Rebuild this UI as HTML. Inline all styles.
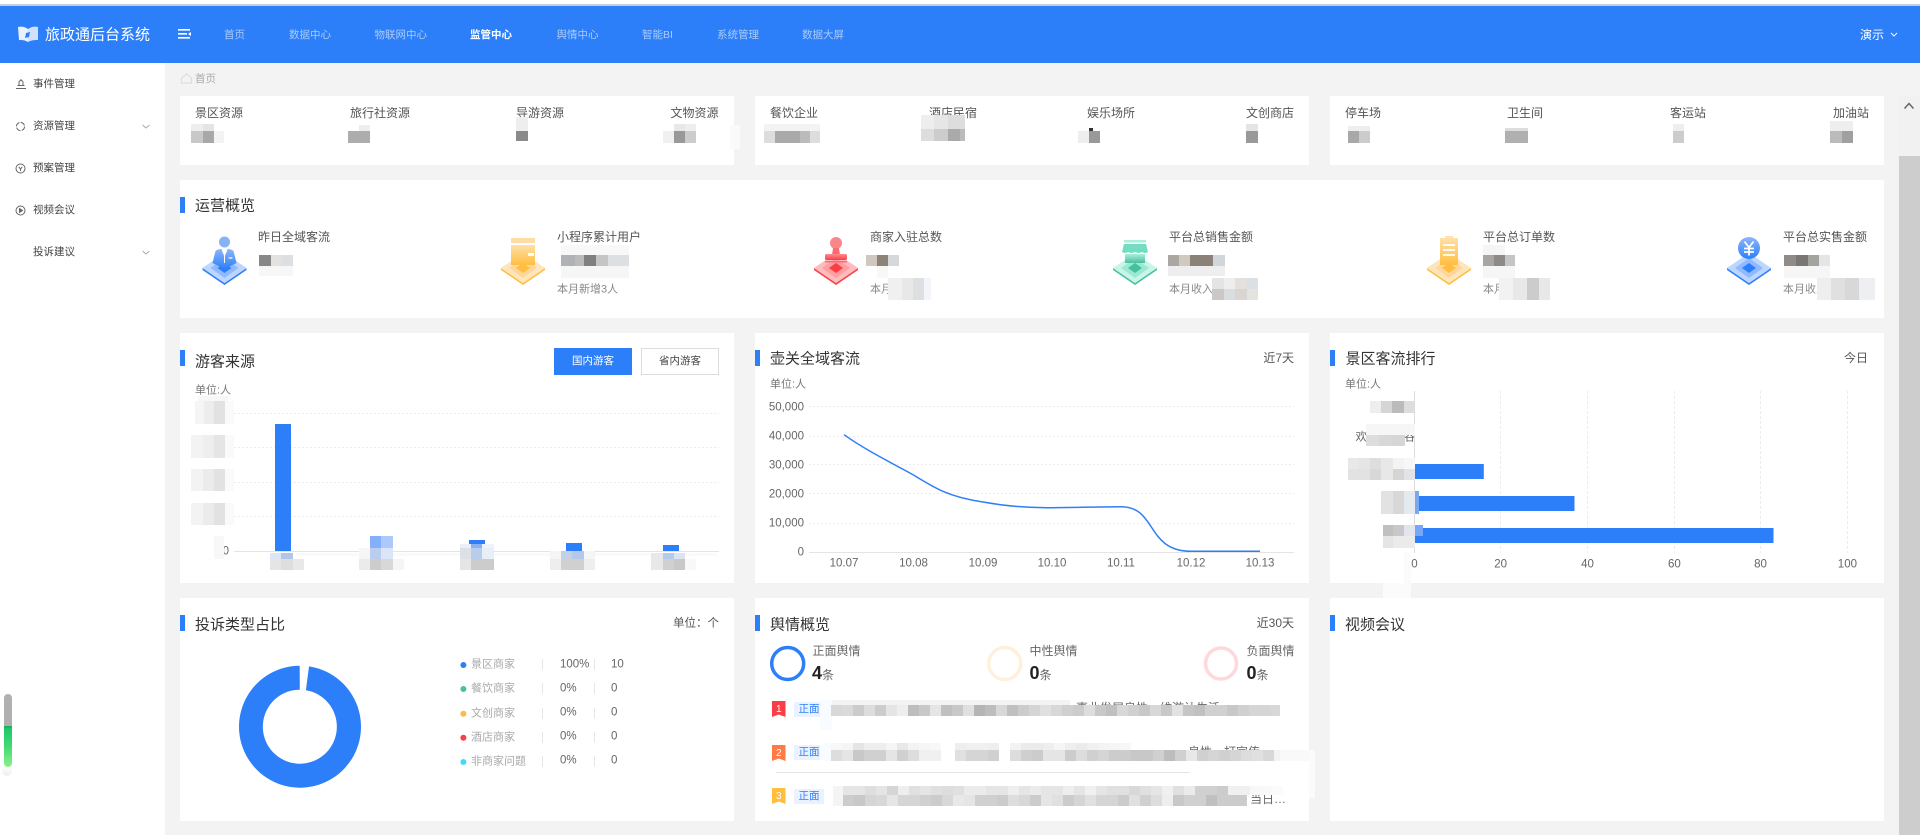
<!DOCTYPE html>
<html lang="zh-CN">
<head>
<meta charset="utf-8">
<title>旅政通后台系统</title>
<style>
html,body{margin:0;padding:0;width:1920px;height:835px;overflow:hidden;background:#f3f3f3;font-family:"Liberation Sans","Noto Sans CJK SC",sans-serif;color:#333}
.box{position:absolute;background:#fff}
.t{position:absolute;white-space:nowrap;line-height:1;transform:translateY(-50%);font-size:12px;color:#555}
.r{transform:translate(-100%,-50%)}
.c{transform:translate(-50%,-50%)}
.h{font-size:15px;color:#333}
.acc{position:absolute;width:5px;height:16px;background:#2d7ff9}
.nav{font-size:10.5px;color:#a9ccfc}
.side{font-size:10.5px;color:#444}
.lbl{font-size:12px;color:#555}
.sub{font-size:10.5px;color:#888}
.lg{font-size:11px;color:#aaa}
.lv{font-size:11.5px;color:#666}
.ax{font-size:11.5px;color:#666}
svg.o{position:absolute;left:0;top:0;overflow:visible}
.r1 rect{y:705px;height:11px;width:11.2px}
.r2 rect{y:750px;height:11px;width:11.2px}
.r2b rect{y:743px;height:7px;width:11.2px}
.r3 rect{y:795px;height:11px;width:11.2px}
.r3b rect{y:786px;height:9px;width:11.2px}
</style>
</head>
<body>
<!-- top strip + header -->
<div class="box" style="left:0;top:0;width:1920px;height:5px;background:#fff"></div>
<div class="box" style="left:0;top:4px;width:1920px;height:2px;background:#c5cedd"></div>
<div class="box" style="left:0;top:6px;width:1920px;height:57px;background:#2d7ff9"></div>
<svg class="o" width="1920" height="835" style="z-index:1">
  <path d="M18 27c4-1 7 0 10 2v13c-3-2-6-2-9-2z" fill="#e9f1ff"/>
  <path d="M28 29c3-2 6-3 10-2v13c-3 0-6 0-10 2z" fill="#cfe1ff"/>
  <path d="M26 33l4-1-1 5-4 1z" fill="#2d7ff9"/>
  <path d="M178 29h12v1.6h-12zM178 33h9v1.6h-9zM178 37h12v1.6h-12z" fill="#fff"/>
  <path d="M191 32l-3 2 3 2z" fill="#fff"/>
  <path d="M1891 33l3 3 3-3" fill="none" stroke="#fff" stroke-width="1"/>
  <path d="M181.5 83v-5l5-4 5 4v5z" fill="none" stroke="#dedede" stroke-width="1.2"/>
</svg>
<span class="t" style="left:45px;top:35px;font-size:15px;color:#fff">旅政通后台系统</span>
<span class="t nav" style="left:224px;top:34.5px">首页</span>
<span class="t nav" style="left:289px;top:34.5px">数据中心</span>
<span class="t nav" style="left:374.5px;top:34.5px">物联网中心</span>
<span class="t nav" style="left:470px;top:34.5px;color:#fff;font-weight:bold">监管中心</span>
<span class="t nav" style="left:556.5px;top:34.5px">舆情中心</span>
<span class="t nav" style="left:642px;top:34.5px">智能BI</span>
<span class="t nav" style="left:717px;top:34.5px">系统管理</span>
<span class="t nav" style="left:802px;top:34.5px">数据大屏</span>
<span class="t" style="left:1860px;top:34.5px;color:#fff">演示</span>

<!-- sidebar -->
<div class="box" style="left:0;top:63px;width:165px;height:772px"></div>
<span class="t side" style="left:33px;top:84px">事件管理</span>
<span class="t side" style="left:33px;top:126px">资源管理</span>
<span class="t side" style="left:33px;top:168px">预案管理</span>
<span class="t side" style="left:33px;top:210px">视频会议</span>
<span class="t side" style="left:33px;top:252px">投诉建议</span>
<svg class="o" width="1920" height="835" style="z-index:1">
  <g fill="none" stroke="#666" stroke-width="1">
    <path d="M16 88.500h10M17.500 85.500h7M21 79v2M19 85v-2.500a2 2 0 0 1 4 0V85"/>
    <circle cx="20.500" cy="126.500" r="4" stroke-dasharray="5 1.300"/>
    <circle cx="20.500" cy="168.500" r="4.500"/><path d="M18.800 167l1.700 2 1.700-2M20.500 169v2"/>
    <circle cx="20.500" cy="210.500" r="4.500"/><path d="M19.500 208.500l3 2-3 2z" fill="#666"/>
    <path d="M142.500 125l3.500 3 3.500-3M142.500 251l3.500 3 3.500-3" stroke="#aaa"/>
  </g>
</svg>

<!-- left slider -->
<div style="position:absolute;left:2px;top:694px;width:10px;height:82px;border-radius:5px;background:linear-gradient(#0000 88%,#eeeeee);"></div>
<div style="position:absolute;left:4px;top:694px;width:8px;height:73px;border-radius:4px;background:linear-gradient(#b0b0b0 0,#b0b0b0 44%,#17a85a 44%,#1fc86a 48%,#3fd873 70%,#8cf08a 100%)"></div>

<!-- breadcrumb -->
<span class="t" style="left:195px;top:79px;font-size:10.5px;color:#aaa">首页</span>

<!-- top cards -->
<div class="box" style="left:180px;top:96px;width:554px;height:69px"></div>
<div class="box" style="left:755px;top:96px;width:554px;height:69px"></div>
<div class="box" style="left:1330px;top:96px;width:554px;height:69px"></div>
<span class="t lbl" style="left:195px;top:113px">景区资源</span>
<span class="t lbl" style="left:350px;top:113px">旅行社资源</span>
<span class="t lbl" style="left:516px;top:113px">导游资源</span>
<span class="t lbl" style="left:670.500px;top:113px">文物资源</span>
<span class="t lbl" style="left:770px;top:113px">餐饮企业</span>
<span class="t lbl" style="left:929px;top:113px">酒店民宿</span>
<span class="t lbl" style="left:1087px;top:113px">娱乐场所</span>
<span class="t lbl" style="left:1246px;top:113px">文创商店</span>
<span class="t lbl" style="left:1345px;top:113px">停车场</span>
<span class="t lbl" style="left:1507px;top:113px">卫生间</span>
<span class="t lbl" style="left:1670px;top:113px">客运站</span>
<span class="t lbl" style="left:1833px;top:113px">加油站</span>

<!-- overview panel -->
<div class="box" style="left:180px;top:180px;width:1704px;height:138px"></div>
<div class="acc" style="left:180px;top:197px"></div>
<span class="t h" style="left:195px;top:206px">运营概览</span>
<span class="t lbl" style="left:258px;top:237px">昨日全域客流</span>
<span class="t lbl" style="left:557px;top:237px">小程序累计用户</span>
<span class="t lbl" style="left:870px;top:237px">商家入驻总数</span>
<span class="t lbl" style="left:1169px;top:237px">平台总销售金额</span>
<span class="t lbl" style="left:1483px;top:237px">平台总订单数</span>
<span class="t lbl" style="left:1783px;top:237px">平台总实售金额</span>
<span class="t sub" style="left:557px;top:290px;font-size:11px">本月新增3人</span>
<span class="t sub" style="left:870px;top:290px;font-size:11px">本月</span>
<span class="t sub" style="left:1169px;top:290px;font-size:11px">本月收入</span>
<span class="t sub" style="left:1483px;top:290px;font-size:11px">本月</span>
<span class="t sub" style="left:1783px;top:290px;font-size:11px">本月收入</span>

<!-- chart panels -->
<div class="box" style="left:180px;top:333px;width:554px;height:250px"></div>
<div class="box" style="left:755px;top:333px;width:554px;height:250px"></div>
<div class="box" style="left:1330px;top:333px;width:554px;height:250px"></div>
<div class="acc" style="left:180px;top:350px"></div>
<div class="acc" style="left:755px;top:350px"></div>
<div class="acc" style="left:1330px;top:350px"></div>
<span class="t h" style="left:195px;top:362px">游客来源</span>
<span class="t h" style="left:770px;top:359px">壶关全域客流</span>
<span class="t h" style="left:1345.500px;top:359px">景区客流排行</span>
<div style="position:absolute;left:554px;top:348px;width:78px;height:27px;background:#2d7ff9;color:#fff;font-size:10.5px;line-height:27px;text-align:center">国内游客</div>
<div style="position:absolute;left:641px;top:348px;width:76px;height:25px;border:1px solid #ddd;background:#fff;color:#444;font-size:10.5px;line-height:25px;text-align:center">省内游客</div>
<span class="t r" style="left:1294px;top:358px">近7天</span>
<span class="t r" style="left:1868px;top:358px">今日</span>
<span class="t" style="left:195px;top:391px;font-size:11px;color:#777">单位:人</span>
<span class="t" style="left:770px;top:385px;font-size:11px;color:#777">单位:人</span>
<span class="t" style="left:1345px;top:385px;font-size:11px;color:#777">单位:人</span>
<span class="t ax r" style="left:804px;top:407.500px">50,000</span>
<span class="t ax r" style="left:804px;top:436.500px">40,000</span>
<span class="t ax r" style="left:804px;top:465.500px">30,000</span>
<span class="t ax r" style="left:804px;top:494.500px">20,000</span>
<span class="t ax r" style="left:804px;top:523.500px">10,000</span>
<span class="t ax r" style="left:804px;top:552.500px">0</span>
<span class="t ax c" style="left:844px;top:564px">10.07</span>
<span class="t ax c" style="left:913.500px;top:564px">10.08</span>
<span class="t ax c" style="left:983px;top:564px">10.09</span>
<span class="t ax c" style="left:1052px;top:564px">10.10</span>
<span class="t ax c" style="left:1121px;top:564px">10.11</span>
<span class="t ax c" style="left:1191px;top:564px">10.12</span>
<span class="t ax c" style="left:1260px;top:564px">10.13</span>
<span class="t ax c" style="left:1414.500px;top:564.500px">0</span>
<span class="t ax c" style="left:1500.600px;top:564.500px">20</span>
<span class="t ax c" style="left:1587.500px;top:564.500px">40</span>
<span class="t ax c" style="left:1674.400px;top:564.500px">60</span>
<span class="t ax c" style="left:1760.500px;top:564.500px">80</span>
<span class="t ax c" style="left:1847.400px;top:564.500px">100</span>
<span class="t ax" style="left:1355.500px;top:438px">欢</span>
<span class="t ax" style="left:1404px;top:438px">谷</span>
<span class="t ax r" style="left:229px;top:552px">0</span>

<!-- bottom panels -->
<div class="box" style="left:180px;top:598px;width:554px;height:223px"></div>
<div class="box" style="left:755px;top:598px;width:554px;height:223px"></div>
<div class="box" style="left:1330px;top:598px;width:554px;height:223px"></div>
<div class="acc" style="left:180px;top:615px"></div>
<div class="acc" style="left:755px;top:615px"></div>
<div class="acc" style="left:1330px;top:615px"></div>
<span class="t h" style="left:195px;top:624.500px">投诉类型占比</span>
<span class="t h" style="left:770px;top:624.500px">舆情概览</span>
<span class="t h" style="left:1345px;top:624.500px">视频会议</span>
<span class="t r" style="left:719px;top:623.500px;font-size:11.500px">单位：个</span>
<span class="t r" style="left:1294px;top:623px">近30天</span>

<!-- legend -->
<span class="t lg" style="left:471px;top:665px">景区商家</span>
<span class="t lg" style="left:471px;top:689px">餐饮商家</span>
<span class="t lg" style="left:471px;top:713.500px">文创商家</span>
<span class="t lg" style="left:471px;top:737.500px">酒店商家</span>
<span class="t lg" style="left:471px;top:762px">非商家问题</span>
<span class="t lv" style="left:560px;top:664.500px">100%</span>
<span class="t lv" style="left:560px;top:688.500px">0%</span>
<span class="t lv" style="left:560px;top:713px">0%</span>
<span class="t lv" style="left:560px;top:737px">0%</span>
<span class="t lv" style="left:560px;top:761px">0%</span>
<span class="t lv" style="left:611px;top:664.500px">10</span>
<span class="t lv" style="left:611px;top:688.500px">0</span>
<span class="t lv" style="left:611px;top:713px">0</span>
<span class="t lv" style="left:611px;top:737px">0</span>
<span class="t lv" style="left:611px;top:761px">0</span>

<!-- sentiment -->
<span class="t" style="left:812.500px;top:651px;color:#666">正面舆情</span>
<span class="t" style="left:1029.500px;top:651px;color:#666">中性舆情</span>
<span class="t" style="left:1246.500px;top:651px;color:#666">负面舆情</span>
<span class="t" style="left:812px;top:673px;font-size:12px;color:#666"><b style="font-size:18px;color:#222">4</b>条</span>
<span class="t" style="left:1029.500px;top:673px;font-size:12px;color:#666"><b style="font-size:18px;color:#222">0</b>条</span>
<span class="t" style="left:1246.500px;top:673px;font-size:12px;color:#666"><b style="font-size:18px;color:#222">0</b>条</span>
<div style="position:absolute;left:794px;top:702px;width:30px;height:15px;background:#eaf2ff;color:#2d7ff9;font-size:10.500px;line-height:15px;text-align:center">正面</div>
<div style="position:absolute;left:794px;top:745px;width:30px;height:15px;background:#eaf2ff;color:#2d7ff9;font-size:10.500px;line-height:15px;text-align:center">正面</div>
<div style="position:absolute;left:794px;top:789px;width:30px;height:15px;background:#eaf2ff;color:#2d7ff9;font-size:10.500px;line-height:15px;text-align:center">正面</div>
<span class="t" style="left:1076px;top:708px;color:#666">事业发展良性，维游认生活</span>
<span class="t" style="left:1188px;top:752px;color:#666">良性，打宣传，</span>
<span class="t" style="left:1250px;top:799px;color:#666">当日…</span>

<!-- scrollbar -->
<div class="box" style="left:1899px;top:96px;width:21px;height:60px;background:#f1f1f1"></div>
<div class="box" style="left:1899px;top:156px;width:21px;height:679px;background:#cdcdcd"></div>

<svg class="o" width="1920" height="835" style="z-index:2">
<defs>
  <linearGradient id="gp" x1="0" y1="0" x2="0" y2="1"><stop offset="0" stop-color="#8ab6fb"/><stop offset="1" stop-color="#2d7ff9"/></linearGradient>
  <linearGradient id="gy" x1="0" y1="0" x2="0" y2="1"><stop offset="0" stop-color="#ffe0a8"/><stop offset="1" stop-color="#ffbe40"/></linearGradient>
  <linearGradient id="gr" x1="0" y1="0" x2="0" y2="1"><stop offset="0" stop-color="#ff8d91"/><stop offset="1" stop-color="#fa3e45"/></linearGradient>
  <linearGradient id="gg" x1="0" y1="0" x2="0" y2="1"><stop offset="0" stop-color="#a9efdb"/><stop offset="1" stop-color="#46c09d"/></linearGradient>
</defs>
<path d="M1904.500 108.500l4.500-5 4.500 5" fill="none" stroke="#666" stroke-width="1.500"/>

<!-- icons: blue person -->
<g transform="translate(202.500 236)">
  <path d="M22 49L0 34v-2l22 15 22-15v2z" fill="#2d7ff9"/><path d="M22 17L44 32 22 47 0 32z" fill="#bcd6ff"/><path d="M22 22L36 32 22 42 8 32z" fill="#8fbaff"/><path d="M22 27l7 5-7 5-7-5z" fill="#2d7ff9"/>
  <circle cx="22" cy="6" r="5.500" fill="#86b2f6"/>
  <path d="M10 27l3-12q2-2 6-2l3 9 3-9q4 0 6 2l3 12-12 6z" fill="url(#gp)"/><path d="M22 14v13" stroke="#fff" stroke-width="1"/><path d="M26 22h4" stroke="#fff" stroke-width="1.200"/>
</g>
<!-- icons: yellow wallet -->
<g transform="translate(501 236)">
  <path d="M22 49L0 34v-2l22 15 22-15v2z" fill="#ffbe40"/><path d="M22 17L44 32 22 47 0 32z" fill="#ffe5bb"/><path d="M22 22L36 32 22 42 8 32z" fill="#ffd79a"/><path d="M22 27l7 5-7 5-7-5z" fill="#ffbe40"/>
  <rect x="10" y="2" width="24" height="5" fill="#ffdca6"/><rect x="10" y="9" width="24" height="20" fill="url(#gy)"/><rect x="27" y="17" width="6" height="3" fill="#fff"/>
</g>
<!-- icons: red stamp -->
<g transform="translate(814 236)">
  <path d="M22 49L0 34v-2l22 15 22-15v2z" fill="#fa3e45"/><path d="M22 17L44 32 22 47 0 32z" fill="#ffbcbe"/><path d="M22 22L36 32 22 42 8 32z" fill="#ff9da0"/><path d="M22 27l7 5-7 5-7-5z" fill="#fa3e45"/>
  <circle cx="22" cy="7" r="6" fill="#f9868a"/><path d="M19 12h6l1 7H18z" fill="#fb6b70"/><rect x="11" y="18" width="22" height="6" rx="1.500" fill="url(#gr)"/><rect x="11" y="25" width="22" height="1.500" fill="#fb6b70"/>
</g>
<!-- icons: green shop -->
<g transform="translate(1113 236)">
  <path d="M22 49L0 34v-2l22 15 22-15v2z" fill="#46c09d"/><path d="M22 17L44 32 22 47 0 32z" fill="#c8f5e7"/><path d="M22 22L36 32 22 42 8 32z" fill="#9ce8d2"/><path d="M22 27l7 5-7 5-7-5z" fill="#46c09d"/>
  <rect x="11" y="4" width="22" height="2.500" fill="#a9efdb"/><path d="M11 8h22l2 8q-3 2-6 0-3 2-7 0-4 2-7 0-3 2-6 0z" fill="#74dcc0"/><rect x="12" y="18" width="20" height="9" fill="url(#gg)"/>
</g>
<!-- icons: yellow clipboard -->
<g transform="translate(1427 236)">
  <path d="M22 49L0 34v-2l22 15 22-15v2z" fill="#ffbe40"/><path d="M22 17L44 32 22 47 0 32z" fill="#ffe5bb"/><path d="M22 22L36 32 22 42 8 32z" fill="#ffd79a"/><path d="M22 27l7 5-7 5-7-5z" fill="#ffbe40"/>
  <rect x="18" y="0" width="8" height="3" fill="#ffe3b5"/><rect x="13" y="2" width="18" height="27" fill="url(#gy)"/><path d="M16 9h12M16 14h12M16 19h12" stroke="#fff" stroke-width="1.800"/>
</g>
<!-- icons: blue yen -->
<g transform="translate(1727 236)">
  <path d="M22 49L0 34v-2l22 15 22-15v2z" fill="#2d7ff9"/><path d="M22 17L44 32 22 47 0 32z" fill="#bcd6ff"/><path d="M22 22L36 32 22 42 8 32z" fill="#8fbaff"/><path d="M22 27l7 5-7 5-7-5z" fill="#2d7ff9"/>
  <circle cx="22" cy="12" r="11" fill="url(#gp)"/><path d="M17.500 5.500l4.500 6 4.500-6M22 11.500v8M17 12.500h10M17 16h10" fill="none" stroke="#fff" stroke-width="1.800"/>
</g>

<!-- chart 1 grid -->
<rect x="296" y="553" width="421" height="3" fill="#fafafa"/>
<g stroke="#ececec" stroke-dasharray="2 2" fill="none">
  <path d="M234 413.500H719M234 447.500H719M234 482.500H719M234 516.500H719"/>
  <path d="M234 551.500H719" stroke="#e4e4e4" stroke-dasharray="none"/>
</g>
<rect x="275" y="424" width="16" height="127" fill="#2d7ff9"/>
<rect x="469" y="540" width="16" height="4" fill="#2d7ff9"/>
<rect x="566" y="543" width="16" height="8" fill="#2d7ff9"/>
<rect x="663" y="545" width="16" height="6" fill="#2d7ff9"/>

<!-- chart 2 -->
<g stroke="#ececec" stroke-dasharray="2 2" fill="none">
  <path d="M809 406.500H1294M809 436.500H1294M809 464.500H1294M809 493.500H1294M809 523.500H1294"/>
  <path d="M809 552.500H1294" stroke="#e4e4e4" stroke-dasharray="none"/>
</g>
<path d="M844 434.700C867 451 892 463 913.500 475C933 487 948 497 983 502C1005 506 1025 508 1052 507.700C1080 507.500 1100 506.700 1121 506.700C1157 506.700 1146 551.300 1191 551.300L1260 551.300" fill="none" stroke="#2d7ff9" stroke-width="1.500"/>

<!-- chart 3 -->
<g stroke="#ececec" stroke-dasharray="3 2" fill="none">
  <path d="M1500.500 391V553M1587.500 391V553M1674.500 391V553M1760.500 391V553M1847.500 391V553"/>
</g>
<path d="M1414.500 391V553" stroke="#ddd" fill="none"/>
<rect x="1414.500" y="464" width="69.300" height="15" fill="#2d7ff9"/>
<rect x="1414.500" y="496" width="160" height="15" fill="#2d7ff9"/>
<rect x="1414.500" y="528" width="359" height="15" fill="#2d7ff9"/>

<!-- donut -->
<path d="M309.020 666.370A61 61 0 1 1 299.680 665.700L299.800 689.700A37 37 0 1 0 305.900 690.200Z" fill="#2d7ff9"/>
<circle cx="463.400" cy="665" r="3" fill="#2d7ff9"/>
<circle cx="463.400" cy="689" r="3" fill="#46c09d"/>
<circle cx="463.400" cy="713.700" r="3" fill="#ffb946"/>
<circle cx="463.400" cy="737.700" r="3" fill="#fa3e45"/>
<circle cx="463.400" cy="762" r="3" fill="#3edcfb"/>
<path d="M542.500 659V670M542.500 683V694M542.500 708V719M542.500 732V743M542.500 756V767M594.500 659V670M594.500 683V694M594.500 708V719M594.500 732V743M594.500 756V767" stroke="#e6e6e6"/>

<!-- rings -->
<circle cx="787.700" cy="663.500" r="16" fill="none" stroke="#2d7ff9" stroke-width="3.500"/>
<circle cx="1004.700" cy="663.500" r="16" fill="none" stroke="#fff0db" stroke-width="3.500"/>
<circle cx="1221" cy="663.500" r="15.500" fill="none" stroke="#ffd9d9" stroke-width="3.500"/>

<!-- ribbons -->
<path d="M772 701h13.500v16l-6.700-2.500-6.800 2.500z" fill="#fa3e45"/>
<path d="M772 745h13.500v16l-6.700-2.500-6.800 2.500z" fill="#ff7a45"/>
<path d="M772 788h13.500v16l-6.700-2.500-6.800 2.500z" fill="#ffbe40"/>
<text x="778.800" y="712" font-size="10" fill="#fff" text-anchor="middle">1</text>
<text x="778.800" y="756" font-size="10" fill="#fff" text-anchor="middle">2</text>
<text x="778.800" y="799" font-size="10" fill="#fff" text-anchor="middle">3</text>
<path d="M776 772.500H1190" stroke="#e4e4e4"/>

<!-- mosaics -->
<g shape-rendering="crispEdges">
  <!-- top cards -->
  <rect x="191" y="124" width="12" height="7" fill="#eee"/><rect x="203" y="124" width="11" height="7" fill="#e4e4e4"/><rect x="191" y="131" width="12" height="12" fill="#c8c8c8"/><rect x="203" y="131" width="11" height="12" fill="#a8a8a8"/><rect x="214" y="131" width="10" height="12" fill="#f3f3f3"/>
  <rect x="359" y="125" width="11" height="6" fill="#eee"/><rect x="348" y="131" width="22" height="12" fill="#adadad"/>
  <rect x="516" y="117" width="12" height="14" fill="#eee"/><rect x="516" y="131" width="12" height="10" fill="#8a8a8a"/>
  <rect x="674" y="124" width="11" height="7" fill="#e8e8e8"/><rect x="685" y="124" width="11" height="7" fill="#eee"/><rect x="663" y="131" width="11" height="12" fill="#f0f0f0"/><rect x="674" y="131" width="11" height="12" fill="#999"/><rect x="685" y="131" width="11" height="12" fill="#ccc"/>
  <rect x="730" y="125" width="10" height="24" fill="#fafafa"/><rect x="764" y="124" width="56" height="7" fill="#f3f3f3"/><rect x="764" y="131" width="11" height="12" fill="#ddd"/><rect x="775" y="131" width="25" height="12" fill="#aaa"/><rect x="800" y="131" width="10" height="12" fill="#bbb"/><rect x="810" y="131" width="10" height="12" fill="#ddd"/>
  <rect x="921" y="115" width="13" height="14" fill="#eee"/><rect x="934" y="115" width="14" height="14" fill="#e6e6e6"/><rect x="948" y="115" width="17" height="14" fill="#ddd"/><rect x="921" y="129" width="13" height="12" fill="#ddd"/><rect x="934" y="129" width="14" height="12" fill="#ccc"/><rect x="948" y="129" width="12" height="12" fill="#aaa"/><rect x="960" y="129" width="5" height="12" fill="#bbb"/>
  <rect x="1078" y="131" width="11" height="12" fill="#eee"/><rect x="1089" y="131" width="11" height="12" fill="#999"/><rect x="1089" y="128" width="4" height="3" fill="#333"/>
  <rect x="1246" y="124" width="12" height="7" fill="#e5e5e5"/><rect x="1246" y="131" width="12" height="12" fill="#999"/>
  <rect x="1348" y="126" width="22" height="5" fill="#eee"/><rect x="1348" y="131" width="11" height="12" fill="#a8a8a8"/><rect x="1359" y="131" width="11" height="12" fill="#ccc"/>
  <rect x="1505" y="128" width="23" height="3" fill="#ddd"/><rect x="1505" y="131" width="23" height="12" fill="#b0b0b0"/>
  <rect x="1673" y="124" width="11" height="7" fill="#eee"/><rect x="1673" y="131" width="11" height="12" fill="#ccc"/>
  <rect x="1830" y="121" width="23" height="10" fill="#eee"/><rect x="1830" y="131" width="12" height="12" fill="#bbb"/><rect x="1842" y="131" width="11" height="12" fill="#a0a0a0"/>
  <!-- overview -->
  <rect x="259" y="255" width="12" height="11" fill="#888"/><rect x="271" y="255" width="11" height="11" fill="#e2e2e2"/><rect x="282" y="255" width="11" height="11" fill="#dde0e2"/><rect x="259" y="266" width="34" height="10" fill="#f7f7f7"/>
  <rect x="561" y="245" width="68" height="10" fill="#f8f8f8"/><rect x="561" y="255" width="14" height="11" fill="#b0b2b5"/><rect x="575" y="255" width="9" height="11" fill="#bbb"/><rect x="584" y="255" width="12" height="11" fill="#808080"/><rect x="596" y="255" width="12" height="11" fill="#c5c5c5"/><rect x="608" y="255" width="21" height="11" fill="#dde0e3"/><rect x="561" y="266" width="68" height="12" fill="#f6f6f6"/>
  <rect x="866" y="255" width="11" height="11" fill="#d0c8be"/><rect x="877" y="255" width="11" height="11" fill="#8c8379"/><rect x="888" y="255" width="11" height="11" fill="#d5d9dc"/><rect x="877" y="266" width="11" height="12" fill="#f8f8f8"/><rect x="888" y="278" width="14" height="22" fill="#f0f0f0"/><rect x="902" y="278" width="11" height="22" fill="#e8e8e8"/><rect x="913" y="278" width="11" height="22" fill="#dddfe1"/><rect x="924" y="278" width="7" height="22" fill="#f2f6fb"/>
  <rect x="1168" y="255" width="11" height="11" fill="#aaa7a2"/><rect x="1179" y="255" width="11" height="11" fill="#cfc9bf"/><rect x="1190" y="255" width="23" height="11" fill="#8a8178"/><rect x="1213" y="255" width="12" height="11" fill="#d2d6da"/><rect x="1168" y="266" width="57" height="10" fill="#eee"/>
  <rect x="1212" y="278" width="12" height="11" fill="#e4e4e4"/><rect x="1224" y="278" width="11" height="11" fill="#eee"/><rect x="1235" y="278" width="12" height="11" fill="#e4e0dd"/><rect x="1247" y="278" width="11" height="11" fill="#dde0e2"/><rect x="1212" y="289" width="12" height="11" fill="#ccc8c5"/><rect x="1224" y="289" width="11" height="11" fill="#d8dde0"/><rect x="1235" y="289" width="12" height="11" fill="#dad5d0"/><rect x="1247" y="289" width="11" height="11" fill="#e5e3e0"/>
  <rect x="1483" y="245" width="22" height="10" fill="#f5f5f5"/><rect x="1483" y="255" width="11" height="11" fill="#a9a5a1"/><rect x="1494" y="255" width="11" height="11" fill="#8d8a88"/><rect x="1505" y="255" width="10" height="11" fill="#c5c5c7"/><rect x="1483" y="266" width="32" height="12" fill="#f6f6f6"/><rect x="1499" y="278" width="14" height="22" fill="#f2f2f2"/><rect x="1513" y="278" width="14" height="22" fill="#e8e8e8"/><rect x="1527" y="278" width="12" height="22" fill="#ccc"/><rect x="1539" y="278" width="11" height="22" fill="#e8e8e8"/>
  <rect x="1784" y="255" width="12" height="11" fill="#8f8b88"/><rect x="1796" y="255" width="12" height="11" fill="#7a7674"/><rect x="1808" y="255" width="11" height="11" fill="#a5a3a0"/><rect x="1819" y="255" width="11" height="11" fill="#e5e5e8"/><rect x="1784" y="266" width="46" height="12" fill="#f6f6f6"/><rect x="1817" y="278" width="14" height="22" fill="#eee"/><rect x="1831" y="278" width="14" height="22" fill="#e0e0e0"/><rect x="1845" y="278" width="14" height="22" fill="#d8d8d8"/><rect x="1859" y="278" width="16" height="22" fill="#eeeff3"/>
  <!-- chart1 y labels -->
  <rect x="198" y="396" width="30" height="5" fill="#f7f7f7"/>
  <rect x="195" y="401" width="9" height="23" fill="#f5f5f5"/><rect x="204" y="401" width="10" height="23" fill="#ededed"/><rect x="214" y="401" width="11" height="23" fill="#e2e2e2"/><rect x="225" y="401" width="9" height="23" fill="#fafafa"/>
  <rect x="191" y="435" width="12" height="23" fill="#f3f3f3"/><rect x="203" y="435" width="11" height="23" fill="#eee"/><rect x="214" y="435" width="11" height="23" fill="#e5e5e5"/><rect x="225" y="435" width="9" height="23" fill="#fafafa"/>
  <rect x="191" y="469" width="12" height="22" fill="#f3f3f3"/><rect x="203" y="469" width="11" height="22" fill="#ebebeb"/><rect x="214" y="469" width="11" height="22" fill="#e2e2e2"/><rect x="225" y="469" width="9" height="22" fill="#fafafa"/>
  <rect x="191" y="503" width="12" height="22" fill="#f3f3f3"/><rect x="203" y="503" width="11" height="22" fill="#ebebeb"/><rect x="214" y="503" width="11" height="22" fill="#e2e2e2"/><rect x="225" y="503" width="9" height="22" fill="#fafafa"/>
  <rect x="214" y="536" width="10" height="23" fill="#f8f8f8"/>
  <!-- chart1 x labels -->
  <rect x="270" y="553" width="11" height="6" fill="#dde6f5"/><rect x="281" y="553" width="12" height="6" fill="#b5c5e5"/><rect x="270" y="559" width="11" height="11" fill="#e5e5e5"/><rect x="281" y="559" width="12" height="11" fill="#dedede"/><rect x="293" y="559" width="11" height="11" fill="#e8e8e8"/>
  <rect x="370" y="536" width="11" height="12" fill="#84b0fb"/><rect x="381" y="536" width="12" height="12" fill="#adc8fb"/><rect x="359" y="548" width="11" height="11" fill="#f6f6f6"/><rect x="370" y="548" width="11" height="11" fill="#bbcdee"/><rect x="381" y="548" width="12" height="11" fill="#dce5f7"/><rect x="359" y="559" width="11" height="11" fill="#ebebeb"/><rect x="370" y="559" width="11" height="11" fill="#ccc"/><rect x="381" y="559" width="12" height="11" fill="#d8d8d8"/><rect x="393" y="559" width="11" height="11" fill="#f5f5f5"/>
  <rect x="460" y="544" width="11" height="4" fill="#e8f0fc"/><rect x="471" y="544" width="11" height="4" fill="#8ab2f2"/><rect x="482" y="544" width="12" height="4" fill="#eef3fb"/><rect x="460" y="548" width="11" height="11" fill="#dde0e5"/><rect x="471" y="548" width="11" height="11" fill="#b8ccee"/><rect x="482" y="548" width="12" height="11" fill="#e8eef8"/><rect x="460" y="559" width="11" height="11" fill="#e5e5e5"/><rect x="471" y="559" width="23" height="11" fill="#ccc"/>
  <rect x="550" y="551" width="11" height="8" fill="#f5f5f5"/><rect x="561" y="551" width="11" height="8" fill="#c5d0e5"/><rect x="572" y="551" width="12" height="8" fill="#b5c8e8"/><rect x="584" y="551" width="11" height="8" fill="#f5f5f5"/><rect x="550" y="559" width="11" height="11" fill="#eee"/><rect x="561" y="559" width="23" height="11" fill="#d0d0d0"/><rect x="584" y="559" width="11" height="11" fill="#eee"/>
  <rect x="651" y="553" width="12" height="6" fill="#e8e8e8"/><rect x="663" y="553" width="11" height="6" fill="#b5cbeb"/><rect x="674" y="553" width="11" height="6" fill="#dde4f0"/><rect x="651" y="559" width="12" height="11" fill="#e8e8e8"/><rect x="663" y="559" width="11" height="11" fill="#d0d0d0"/><rect x="674" y="559" width="11" height="11" fill="#c8c8c8"/><rect x="685" y="559" width="11" height="11" fill="#f8f8f8"/>
  <!-- chart3 labels -->
  <rect x="1370" y="401" width="11" height="12" fill="#eee"/><rect x="1381" y="401" width="11" height="12" fill="#d5d5d5"/><rect x="1392" y="401" width="12" height="12" fill="#bbb"/><rect x="1404" y="401" width="11" height="12" fill="#ddd"/>
  <rect x="1366" y="424" width="49" height="11" fill="#f6f6f6"/><rect x="1366" y="435" width="13" height="11" fill="#ddd"/><rect x="1379" y="435" width="13" height="11" fill="#d8d8d8"/><rect x="1392" y="435" width="13" height="11" fill="#d6d6d6"/>
  <rect x="1348" y="458" width="11" height="11" fill="#e8e8e8"/><rect x="1359" y="458" width="11" height="11" fill="#e5e5e5"/><rect x="1370" y="458" width="11" height="11" fill="#dedede"/><rect x="1381" y="458" width="12" height="11" fill="#e8e8e8"/><rect x="1393" y="458" width="11" height="11" fill="#f3f3f3"/><rect x="1404" y="458" width="11" height="11" fill="#f7f7f7"/>
  <rect x="1348" y="469" width="22" height="11" fill="#e2e2e2"/><rect x="1370" y="469" width="11" height="11" fill="#d8d8d8"/><rect x="1381" y="469" width="12" height="11" fill="#e8e8e8"/><rect x="1393" y="469" width="11" height="11" fill="#d5d5d5"/><rect x="1404" y="469" width="11" height="11" fill="#e0e4e8"/>
  <rect x="1381" y="491" width="12" height="23" fill="#e2e2e2"/><rect x="1393" y="491" width="11" height="23" fill="#d8d8d8"/><rect x="1404" y="491" width="11" height="23" fill="#e5eaef"/><rect x="1415" y="491" width="4" height="23" fill="#78a8f5"/>
  <rect x="1383" y="525" width="10" height="11" fill="#c0c0c0"/><rect x="1393" y="525" width="11" height="11" fill="#c8c8c8"/><rect x="1404" y="525" width="11" height="11" fill="#e0e5ee"/><rect x="1415" y="525" width="8" height="11" fill="#78a8f5"/><rect x="1383" y="536" width="10" height="12" fill="#e5e5e5"/><rect x="1393" y="536" width="22" height="12" fill="#ebebeb"/>
  <rect x="1404" y="553" width="7" height="30" fill="#fbfbfb"/><rect x="1383" y="583" width="28" height="15" fill="#fbfbfb"/>
  <!-- sentiment overlays -->
  <rect x="820" y="700" width="12" height="30" fill="#f8fbff"/><rect x="820" y="743" width="12" height="18" fill="#f8fbff"/>
  <rect x="832" y="700" width="238" height="5" fill="#f3f3f3"/>
  <g class="r1"><rect x="831" fill="#d8d8d8"/><rect x="842" fill="#dadada"/><rect x="853" fill="#ccc"/><rect x="864" fill="#ddd"/><rect x="875" fill="#ccc"/><rect x="886" fill="#e5e5e5"/><rect x="897" fill="#eee"/><rect x="908" fill="#bdbdbd"/><rect x="919" fill="#c8c8c8"/><rect x="930" fill="#e5e5e5"/><rect x="941" fill="#c0c0c0"/><rect x="952" fill="#c8c8c8"/><rect x="963" fill="#e0e0e0"/><rect x="974" fill="#b5b5b5"/><rect x="985" fill="#bdbdbd"/><rect x="996" fill="#d8d8d8"/><rect x="1007" fill="#c0c0c0"/><rect x="1018" fill="#ccc"/><rect x="1029" fill="#d5d5d5"/><rect x="1040" fill="#e0e0e0"/><rect x="1051" fill="#d8d8d8"/><rect x="1062" fill="#d0d0d0"/><rect x="1073" fill="#ccc"/><rect x="1084" fill="#ddd"/><rect x="1095" fill="#c8c8c8"/><rect x="1106" fill="#c0c0c0"/><rect x="1117" fill="#d8d8d8"/><rect x="1128" fill="#d0d0d0"/><rect x="1139" fill="#c8c8c8"/><rect x="1150" fill="#d8d8d8"/><rect x="1161" fill="#c8c8c8"/><rect x="1172" fill="#e2e2e2"/><rect x="1183" fill="#c5c5c5"/><rect x="1194" fill="#c0c0c0"/><rect x="1205" fill="#d0d0d0"/><rect x="1216" fill="#d0d0d0"/><rect x="1227" fill="#c8c8c8"/><rect x="1238" fill="#d0d0d0"/><rect x="1249" fill="#d5d5d5"/><rect x="1260" fill="#d5d5d5"/><rect x="1271" fill="#d8d8d8" style="width:9px"/></g>
  <g class="r2b"><rect x="831" fill="#f8f8f8"/><rect x="842" fill="#f5f5f5"/><rect x="853" fill="#e5e5e5"/><rect x="864" fill="#eee"/><rect x="875" fill="#eee"/><rect x="886" fill="#f5f5f5"/><rect x="897" fill="#e8e8e8"/><rect x="908" fill="#f3f3f3"/><rect x="919" fill="#f6f6f6"/><rect x="930" fill="#f8f8f8"/><rect x="955" fill="#eee"/><rect x="966" fill="#f0f0f0"/><rect x="977" fill="#f0f0f0"/><rect x="988" fill="#eee"/><rect x="1010" fill="#f3f3f3"/><rect x="1021" fill="#ebebeb"/><rect x="1032" fill="#ebebeb"/><rect x="1043" fill="#eee"/><rect x="1054" fill="#f5f5f5"/><rect x="1065" fill="#eee"/><rect x="1076" fill="#ebebeb"/><rect x="1087" fill="#f0f0f0"/><rect x="1098" fill="#f3f3f3"/><rect x="1109" fill="#f5f5f5"/><rect x="1120" fill="#f7f7f7"/></g>
  <g class="r2"><rect x="831" fill="#ddd"/><rect x="842" fill="#e5e5e5"/><rect x="853" fill="#c8c8c8"/><rect x="864" fill="#d0d0d0"/><rect x="875" fill="#d0d0d0"/><rect x="886" fill="#e5e5e5"/><rect x="897" fill="#d0d0d0"/><rect x="908" fill="#ddd"/><rect x="919" fill="#f0f0f0"/><rect x="930" fill="#f0f0f0"/><rect x="955" fill="#e0e0e0"/><rect x="966" fill="#d5d5d5"/><rect x="977" fill="#d5d5d5"/><rect x="988" fill="#d0d0d0"/><rect x="1010" fill="#ddd"/><rect x="1021" fill="#cfcfcf"/><rect x="1032" fill="#ccc"/><rect x="1043" fill="#e5e5e5"/><rect x="1054" fill="#e5e5e5"/><rect x="1065" fill="#ccc"/><rect x="1076" fill="#ddd"/><rect x="1087" fill="#d0d0d0"/><rect x="1098" fill="#d5d5d5"/><rect x="1109" fill="#ccc"/><rect x="1120" fill="#ccc"/><rect x="1131" fill="#c8c8c8"/><rect x="1142" fill="#c8c8c8"/><rect x="1153" fill="#d0d0d0"/><rect x="1164" fill="#bdbdbd"/><rect x="1175" fill="#d0d0d0"/><rect x="1186" fill="#e8e8e8"/><rect x="1197" fill="#d0d0d0"/><rect x="1208" fill="#d5d5d5"/><rect x="1219" fill="#d0d0d0"/><rect x="1230" fill="#d5d5d5"/><rect x="1241" fill="#ddd"/><rect x="1252" fill="#e0e0e0"/><rect x="1263" fill="#d8d8d8"/><rect x="1274" fill="#f3f3f3" style="width:6px"/></g>
  <rect x="1280" y="750" width="29" height="11" fill="#f9f9f9"/><rect x="1309" y="750" width="6" height="48" fill="#fbfbfb"/>
  <rect x="833" y="786" width="10" height="20" fill="#f4f4f4"/>
  <g class="r3b"><rect x="843" fill="#e5e5e5"/><rect x="854" fill="#e5e5e5"/><rect x="865" fill="#dedede"/><rect x="876" fill="#e5e5e5"/><rect x="887" fill="#d5d5d5"/><rect x="898" fill="#eee"/><rect x="909" fill="#e0e0e0"/><rect x="920" fill="#e5e5e5"/><rect x="931" fill="#e0e0e0"/><rect x="942" fill="#ddd"/><rect x="953" fill="#e0e0e0"/><rect x="964" fill="#ebebeb"/><rect x="975" fill="#ebebeb"/><rect x="986" fill="#e5e5e5"/><rect x="997" fill="#e5e5e5"/><rect x="1008" fill="#eee"/><rect x="1019" fill="#e5e5e5"/><rect x="1030" fill="#ebebeb"/><rect x="1041" fill="#e5e5e5"/><rect x="1052" fill="#e5e5e5"/><rect x="1063" fill="#eee"/><rect x="1074" fill="#e5e5e5"/><rect x="1085" fill="#f0f0f0"/><rect x="1096" fill="#e5e5e5"/><rect x="1107" fill="#e0e0e0"/><rect x="1118" fill="#e0e0e0"/><rect x="1129" fill="#d8d8d8"/><rect x="1140" fill="#e0e0e0"/><rect x="1151" fill="#e5e5e5"/><rect x="1162" fill="#f0f0f0"/><rect x="1173" fill="#e0e0e0"/><rect x="1184" fill="#ebebeb"/><rect x="1195" fill="#d0d0d0"/><rect x="1206" fill="#d0d0d0"/><rect x="1217" fill="#ccc"/><rect x="1228" fill="#f0f0f0"/><rect x="1239" fill="#f0f0f0"/><rect x="1250" fill="#f8f8f8"/><rect x="1261" fill="#f9f9f9"/><rect x="1272" fill="#fbfbfb"/></g>
  <g class="r3"><rect x="843" fill="#ccc"/><rect x="854" fill="#c8c8c8"/><rect x="865" fill="#d5d5d5"/><rect x="876" fill="#d8d8d8"/><rect x="887" fill="#e5e5e5"/><rect x="898" fill="#d5d5d5"/><rect x="909" fill="#d5d5d5"/><rect x="920" fill="#d0d0d0"/><rect x="931" fill="#ccc"/><rect x="942" fill="#d8d8d8"/><rect x="953" fill="#e8e8e8"/><rect x="964" fill="#e5e5e5"/><rect x="975" fill="#d0d0d0"/><rect x="986" fill="#d0d0d0"/><rect x="997" fill="#ccc"/><rect x="1008" fill="#ddd"/><rect x="1019" fill="#d8d8d8"/><rect x="1030" fill="#ccc"/><rect x="1041" fill="#e5e5e5"/><rect x="1052" fill="#e0e0e0"/><rect x="1063" fill="#ccc"/><rect x="1074" fill="#d5d5d5"/><rect x="1085" fill="#e0e0e0"/><rect x="1096" fill="#d5d5d5"/><rect x="1107" fill="#d5d5d5"/><rect x="1118" fill="#ccc"/><rect x="1129" fill="#e0e0e0"/><rect x="1140" fill="#d0d0d0"/><rect x="1151" fill="#ddd"/><rect x="1162" fill="#eee"/><rect x="1173" fill="#c8c8c8"/><rect x="1184" fill="#d0d0d0"/><rect x="1195" fill="#d0d0d0"/><rect x="1206" fill="#c0c0c0"/><rect x="1217" fill="#ccc"/><rect x="1228" fill="#ccc" style="width:19px"/></g>
</g>
</svg>
</body>
</html>
